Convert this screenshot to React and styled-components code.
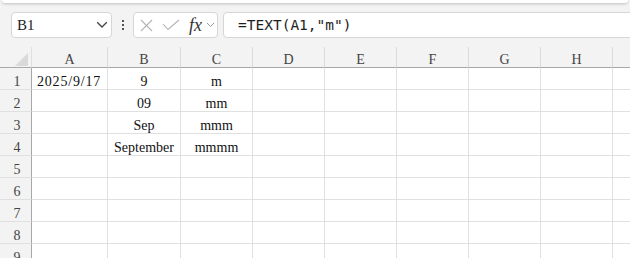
import React from 'react';
import styled, { createGlobalStyle } from 'styled-components';

const GlobalStyle = createGlobalStyle`
   html, body {
      margin: 0;
      padding: 0;
      background: #f3f3f3;
   }
`;

const Page = styled.div`
   width: 630px;
   height: 258px;
   overflow: hidden;
   background: #f3f3f3;
`;

const RibbonEdge = styled.div`
   height: 3px;
   margin: 0 2px;
   background: #fff;
   border-radius: 0 0 6px 6px;
   box-shadow: 0 1px 3px rgba(0, 0, 0, 0.22);
`;

const FormulaBar = styled.div`
   display: flex;
   align-items: center;
   height: 26px;
   margin-top: 9px;
   padding-left: 11px;
`;

const Box = styled.div`
   box-sizing: border-box;
   height: 26px;
   display: flex;
   align-items: center;
   background: #fff;
   border: 1px solid #d6d6d6;
   border-radius: 4px;
`;

const NameBox = styled(Box)`
   width: 101px;
   justify-content: space-between;
   padding: 0 3px 0 5px;
   font-family: 'Liberation Serif', serif;
   font-size: 15px;
   color: #222;
`;

const Dots = styled.div`
   width: 21px;
   display: flex;
   flex-direction: column;
   align-items: center;
   gap: 2px;
   span {
      width: 2px;
      height: 2px;
      background: #555;
   }
`;

const FxBox = styled(Box)`
   width: 85px;
   padding-left: 6px;
`;

const FxLabel = styled.span`
   font-family: 'Liberation Serif', serif;
   font-style: italic;
   font-size: 18px;
   color: #333;
   margin: 0 4px 0 9px;
`;

const FormulaInput = styled(Box)`
   flex: 1;
   margin-left: 5px;
   margin-right: -10px;
   padding-left: 14px;
   font-family: 'DejaVu Sans Mono', 'Liberation Mono', monospace;
   font-size: 14.5px;
   color: #1e1e1e;
`;

const Sheet = styled.div`
   margin-top: 7px;
   display: flex;
   flex-direction: column;
`;

const HeaderRow = styled.div`
   display: flex;
   padding-top: 2px;
`;

const Row = styled.div`
   display: flex;
`;

const cellFont = `
   font-family: 'Liberation Serif', serif;
   font-size: 14px;
   line-height: 14px;
`;

const Corner = styled.div`
   box-sizing: border-box;
   flex: 0 0 32px;
   height: 21px;
   border-right: 1px solid #e0e0e0;
   border-bottom: 1px solid #a8a8a8;
   display: flex;
   justify-content: flex-end;
   align-items: flex-end;
   padding: 0 3px 1px 0;
`;

const ColHead = styled.div`
   box-sizing: border-box;
   flex: 0 0 ${({ $w }) => $w}px;
   height: 21px;
   border-right: 1px solid #dcdcdc;
   border-bottom: 1px solid #a8a8a8;
   display: flex;
   justify-content: center;
   align-items: flex-end;
   color: #444;
   ${cellFont}
`;

const RowHead = styled.div`
   box-sizing: border-box;
   flex: 0 0 32px;
   height: 22px;
   background: #f3f3f3;
   border-right: 1px solid #a8a8a8;
   border-bottom: 1px solid #e0e0e0;
   display: flex;
   justify-content: center;
   align-items: flex-end;
   padding-left: 3px;
   color: #444;
   ${cellFont}
`;

const Cell = styled.div`
   box-sizing: border-box;
   flex: 0 0 ${({ $w }) => $w}px;
   height: 22px;
   background: #fff;
   border-right: 1px solid #e0e0e0;
   border-bottom: 1px solid #e0e0e0;
   display: flex;
   align-items: flex-end;
   justify-content: ${({ $align }) => ($align === 'right' ? 'flex-end' : 'center')};
   padding-right: ${({ $align }) => ($align === 'right' ? '6px' : '0')};
   white-space: nowrap;
   color: #111;
   letter-spacing: ${({ $align }) => ($align === 'right' ? '0.8px' : '0')};
   ${cellFont}
`;

const Chevron = ({ size = 11, color = '#555' }) => (
   <svg width={size} height={size * 0.6} viewBox="0 0 10 6">
      <polyline points="1,1 5,5 9,1" fill="none" stroke={color} strokeWidth="1.1" />
   </svg>
);

const columns = [
   { key: 'A', w: 76 },
   { key: 'B', w: 73 },
   { key: 'C', w: 72 },
   { key: 'D', w: 72 },
   { key: 'E', w: 72 },
   { key: 'F', w: 72 },
   { key: 'G', w: 72 },
   { key: 'H', w: 72 },
   { key: 'I', w: 72, hidden: true },
];

const data = {
   1: { A: '2025/9/17', B: '9', C: 'm' },
   2: { B: '09', C: 'mm' },
   3: { B: 'Sep', C: 'mmm' },
   4: { B: 'September', C: 'mmmm' },
};

const App = () => {
   const rows = [1, 2, 3, 4, 5, 6, 7, 8, 9];
   return (
      <Page>
         <GlobalStyle />
         <RibbonEdge />
         <FormulaBar>
            <NameBox>
               <span>B1</span>
               <Chevron size={12} color="#444" />
            </NameBox>
            <Dots>
               <span />
               <span />
               <span />
            </Dots>
            <FxBox>
               <svg width="13" height="13" viewBox="0 0 13 13">
                  <path d="M1 1 L12 12 M12 1 L1 12" stroke="#b4b4b4" strokeWidth="1.1" fill="none" />
               </svg>
               <svg width="18" height="12" viewBox="0 0 18 12" style={{ marginLeft: 9 }}>
                  <path d="M1 5 L6 10.5 L17 1" stroke="#b4b4b4" strokeWidth="1.1" fill="none" />
               </svg>
               <FxLabel>fx</FxLabel>
               <Chevron size={9} color="#999" />
            </FxBox>
            <FormulaInput>=TEXT(A1,"m")</FormulaInput>
         </FormulaBar>
         <Sheet>
            <HeaderRow>
               <Corner>
                  <svg width="13" height="13" viewBox="0 0 13 13">
                     <polygon points="13,0 13,13 0,13" fill="#d9d9d9" />
                  </svg>
               </Corner>
               {columns.map((c) => (
                  <ColHead key={c.key} $w={c.w}>
                     {c.hidden ? '' : c.key}
                  </ColHead>
               ))}
            </HeaderRow>
            {rows.map((r) => (
               <Row key={r}>
                  <RowHead>{r}</RowHead>
                  {columns.map((c) => (
                     <Cell key={c.key} $w={c.w} $align={c.key === 'A' ? 'right' : 'center'}>
                        {data[r] && data[r][c.key]}
                     </Cell>
                  ))}
               </Row>
            ))}
         </Sheet>
      </Page>
   );
};

export default App;
